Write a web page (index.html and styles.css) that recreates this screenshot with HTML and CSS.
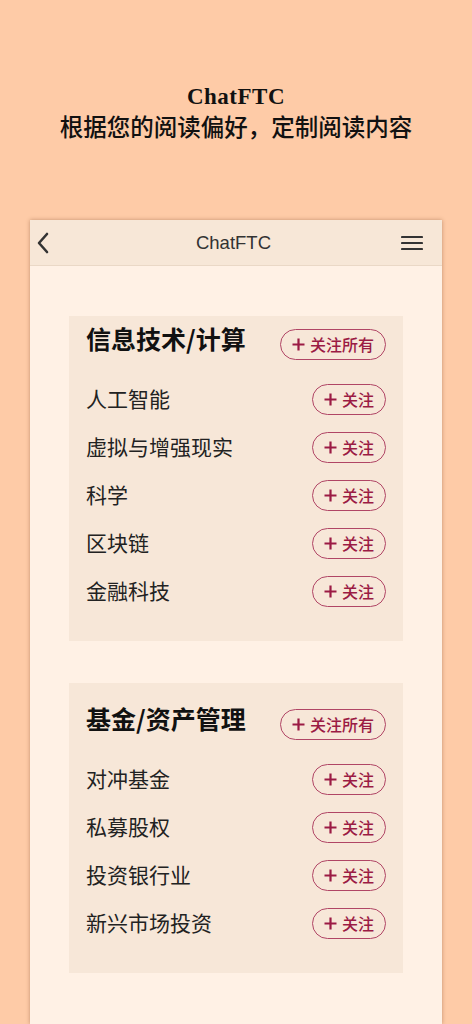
FILE: index.html
```html
<!DOCTYPE html>
<html lang="zh">
<head>
    <meta charset="UTF-8">
    <meta name="viewport" content="width=device-width, initial-scale=1.0">
    <title>ChatFTC</title>
    <link rel="stylesheet" href="styles.css">
</head>
<body>
    <!-- Intestazione promo -->
    <div class="promo">
        <div class="promo-title">ChatFTC</div>
        <div class="promo-sub">根据您的阅读偏好，定制阅读内容</div>
    </div>

    <div class="phone">
        <div class="topbar">
            <svg class="icon-back" width="14" height="22" viewBox="0 0 14 22">
                <path d="M11 2 L3 11 L11 20" fill="none" stroke="#333" stroke-width="2.6" stroke-linecap="round" stroke-linejoin="round"/>
            </svg>
            <div class="topbar-title">ChatFTC</div>
            <svg class="icon-menu" width="22" height="16" viewBox="0 0 22 16">
                <path d="M1 2 H21 M1 8 H21 M1 14 H21" fill="none" stroke="#333" stroke-width="2.2" stroke-linecap="round"/>
            </svg>
        </div>

        <div class="content">
            <div class="section first">
                <div class="section-head">
                    <div class="section-title">信息技术/计算</div>
                    <button class="follow"><svg class="plus" width="13" height="13" viewBox="0 0 13 13"><path d="M6.5 0.5 V12.5 M0.5 6.5 H12.5" stroke="#9b1b44" stroke-width="2.2"/></svg>关注所有</button>
                </div>
                <div class="row"><span>人工智能</span><button class="follow"><svg class="plus" width="13" height="13" viewBox="0 0 13 13"><path d="M6.5 0.5 V12.5 M0.5 6.5 H12.5" stroke="#9b1b44" stroke-width="2.2"/></svg>关注</button></div>
                <div class="row"><span>虚拟与增强现实</span><button class="follow"><svg class="plus" width="13" height="13" viewBox="0 0 13 13"><path d="M6.5 0.5 V12.5 M0.5 6.5 H12.5" stroke="#9b1b44" stroke-width="2.2"/></svg>关注</button></div>
                <div class="row"><span>科学</span><button class="follow"><svg class="plus" width="13" height="13" viewBox="0 0 13 13"><path d="M6.5 0.5 V12.5 M0.5 6.5 H12.5" stroke="#9b1b44" stroke-width="2.2"/></svg>关注</button></div>
                <div class="row"><span>区块链</span><button class="follow"><svg class="plus" width="13" height="13" viewBox="0 0 13 13"><path d="M6.5 0.5 V12.5 M0.5 6.5 H12.5" stroke="#9b1b44" stroke-width="2.2"/></svg>关注</button></div>
                <div class="row"><span>金融科技</span><button class="follow"><svg class="plus" width="13" height="13" viewBox="0 0 13 13"><path d="M6.5 0.5 V12.5 M0.5 6.5 H12.5" stroke="#9b1b44" stroke-width="2.2"/></svg>关注</button></div>
            </div>

            <div class="section">
                <div class="section-head">
                    <div class="section-title">基金/资产管理</div>
                    <button class="follow"><svg class="plus" width="13" height="13" viewBox="0 0 13 13"><path d="M6.5 0.5 V12.5 M0.5 6.5 H12.5" stroke="#9b1b44" stroke-width="2.2"/></svg>关注所有</button>
                </div>
                <div class="row"><span>对冲基金</span><button class="follow"><svg class="plus" width="13" height="13" viewBox="0 0 13 13"><path d="M6.5 0.5 V12.5 M0.5 6.5 H12.5" stroke="#9b1b44" stroke-width="2.2"/></svg>关注</button></div>
                <div class="row"><span>私募股权</span><button class="follow"><svg class="plus" width="13" height="13" viewBox="0 0 13 13"><path d="M6.5 0.5 V12.5 M0.5 6.5 H12.5" stroke="#9b1b44" stroke-width="2.2"/></svg>关注</button></div>
                <div class="row"><span>投资银行业</span><button class="follow"><svg class="plus" width="13" height="13" viewBox="0 0 13 13"><path d="M6.5 0.5 V12.5 M0.5 6.5 H12.5" stroke="#9b1b44" stroke-width="2.2"/></svg>关注</button></div>
                <div class="row"><span>新兴市场投资</span><button class="follow"><svg class="plus" width="13" height="13" viewBox="0 0 13 13"><path d="M6.5 0.5 V12.5 M0.5 6.5 H12.5" stroke="#9b1b44" stroke-width="2.2"/></svg>关注</button></div>
            </div>
        </div>
    </div>
</body>
</html>
```

FILE: styles.css
```css
html, body {
    margin: 0;
    height: 1024px;
    overflow: hidden;
}
body {
    background-color: #fecba7;
    font-family: "Noto Sans CJK SC", "Noto Sans", sans-serif;
    color: #1a1a1a;
}
.promo {
    padding-top: 82px;
    text-align: center;
}
.promo-title {
    font-family: "Liberation Serif", serif;
    font-weight: bold;
    font-size: 23px;
    line-height: 30px;
    letter-spacing: 0.5px;
    color: #111;
}
.promo-sub {
    font-family: "Liberation Serif", "Noto Sans CJK SC", serif;
    font-weight: 500;
    font-size: 23.5px;
    line-height: 32px;
    color: #111;
}
.phone {
    width: 412px;
    margin: 76px auto 0;
    height: 804px;
    background-color: #fff1e5;
    box-shadow: 0 0 4px rgba(120, 70, 40, 0.45);
}
.topbar {
    height: 45px;
    background-color: #f7e7d7;
    border-bottom: 1px solid #ead8c6;
    display: flex;
    align-items: center;
    justify-content: space-between;
    padding: 0 19px 0 6px;
}
.topbar-title {
    font-family: "Liberation Sans", Arial, sans-serif;
    font-size: 18.5px;
    color: #333;
    margin-left: 16px;
}
.icon-back {
    display: block;
}
.icon-menu {
    display: block;
}
.content {
    padding: 50px 39px 0;
}
.section {
    background-color: #f7e7d8;
    padding: 20px 17px 26px;
    margin-top: 42px;
}
.section.first {
    margin-top: 0;
    padding-top: 7px;
}
.section-head {
    height: 42px;
    display: flex;
    align-items: center;
    justify-content: space-between;
    margin-bottom: 10px;
}
.section-title {
    font-size: 25px;
    font-weight: bold;
    color: #111;
    margin-top: -12px;
}
.row {
    height: 48px;
    display: flex;
    align-items: center;
    justify-content: space-between;
    font-size: 21px;
    color: #222;
}
.row span {
    margin-top: -2px;
}
.follow {
    height: 31px;
    box-sizing: border-box;
    border: 1.5px solid #b04565;
    border-radius: 16px;
    background: transparent;
    padding: 0 11px 0 11px;
    display: flex;
    align-items: center;
    gap: 5px;
    font-family: "Noto Sans CJK SC", sans-serif;
    font-size: 16px;
    font-weight: 500;
    color: #9b1b44;
}
.plus {
    display: block;
}
```
